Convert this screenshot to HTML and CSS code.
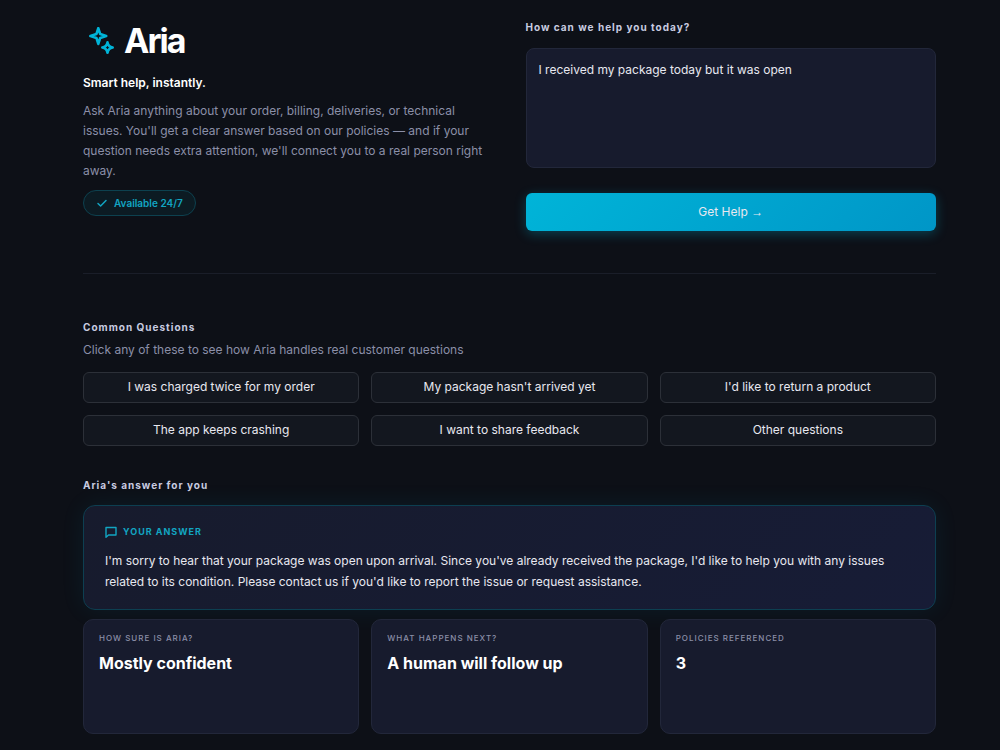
FILE: index.html
```
<!DOCTYPE html>
<html lang="en">
<head>
	<meta charset="utf-8">
	<title>Aria</title>
	<meta name="viewport" content="width=device-width, initial-scale=1">
	<link rel="stylesheet" href="styles.css">
</head>

<body>

	<main class="page">

		<section class="hero">
			<div class="intro">
				<h1 class="brand">
					<svg class="brand-icon" viewBox="0 0 28 28" fill="none" stroke="currentColor" stroke-width="2.6" stroke-linejoin="round" aria-hidden="true">
						<path d="M10.3 1.2 L12.2 7.1 L18.2 9 L12.2 10.9 L10.3 16.9 L8.4 10.9 L2.4 9 L8.4 7.1 Z"/>
						<path d="M19.5 15.4 Q20.3 19.7 24.7 20.5 Q20.3 21.3 19.5 25.7 Q18.7 21.3 14.3 20.5 Q18.7 19.7 19.5 15.4 Z"/>
					</svg>
					Aria
				</h1>
				<p class="tagline">Smart help, instantly.</p>
				<p class="about">Ask Aria anything about your order, billing, deliveries, or technical issues. You'll get a clear answer based on our policies — and if your question needs extra attention, we'll connect you to a real person right away.</p>
				<span class="badge">
					<svg class="badge-icon" viewBox="0 0 12 12" fill="none" stroke="currentColor" stroke-width="1.5" stroke-linecap="round" stroke-linejoin="round" aria-hidden="true">
						<path d="M2 6.5 L4.6 9 L10 3.5"/>
					</svg>
					Available 24/7
				</span>
			</div>

			<form class="ask">
				<label class="label" for="question">How can we help you today?</label>
				<textarea class="question" id="question" spellcheck="false">I received my package today but it was open</textarea>
				<button class="submit" type="button">Get Help <span class="arrow">→</span></button>
			</form>
		</section>

		<hr class="divider">

		<section class="common">
			<h2 class="label">Common Questions</h2>
			<p class="hint">Click any of these to see how Aria handles real customer questions</p>
			<div class="grid">
				<button class="option" type="button">I was charged twice for my order</button>
				<button class="option" type="button">My package hasn't arrived yet</button>
				<button class="option" type="button">I'd like to return a product</button>
				<button class="option" type="button">The app keeps crashing</button>
				<button class="option" type="button">I want to share feedback</button>
				<button class="option" type="button">Other questions</button>
			</div>
		</section>

		<section class="result">
			<h2 class="label">Aria's answer for you</h2>
			<article class="answer">
				<h3 class="answer-title">
					<svg class="answer-icon" viewBox="0 0 12 12" fill="none" stroke="currentColor" stroke-width="1.4" stroke-linejoin="round" aria-hidden="true">
						<path d="M1 1.5 H11 V9 H3.5 L1 11.2 Z"/>
					</svg>
					Your answer
				</h3>
				<p class="answer-text">I'm sorry to hear that your package was open upon arrival. Since you've already received the package, I'd like to help you with any issues related to its condition. Please contact us if you'd like to report the issue or request assistance.</p>
			</article>
			<div class="grid">
				<div class="card">
					<h3 class="card-title">How sure is Aria?</h3>
					<p class="card-value">Mostly confident</p>
				</div>
				<div class="card">
					<h3 class="card-title">What happens next?</h3>
					<p class="card-value">A human will follow up</p>
				</div>
				<div class="card">
					<h3 class="card-title">Policies referenced</h3>
					<p class="card-value">3</p>
				</div>
			</div>
		</section>

	</main>

</body>
</html>
```
FILE: styles.css
```
* {
	box-sizing: border-box;
	padding: 0;
	margin: 0;
}
body {
	background-color: #0d1017;
	color: #e8e8f0;
	font-family: Inter, "Liberation Sans", sans-serif;
	font-size: 12px;
	line-height: 20px;
}
button,
textarea {
	font: inherit;
	color: inherit;
}
button {
	cursor: pointer;
}
.page {
	padding: 17px 64px 16px 83px;
}

/* hero */
.hero {
	display: grid;
	grid-template-columns: 1fr 1fr;
	gap: 32px;
}
.brand {
	display: flex;
	align-items: center;
	gap: 8px;
	padding-left: 5px;
	color: #fff;
	font-size: 34px;
	font-weight: 700;
	line-height: 48px;
	letter-spacing: -2px;
}
.brand-icon {
	width: 28px;
	height: 28px;
	color: #00b4d8;
}
.tagline {
	margin-top: 8px;
	color: #fff;
	font-weight: 600;
}
.about {
	margin-top: 8px;
	color: #8b8fa8;
}
.badge {
	display: inline-flex;
	align-items: center;
	gap: 6px;
	margin-top: 9px;
	padding: 2px 12px;
	border: 1px solid #0d414f;
	border-radius: 16px;
	background-color: #0c1b23;
	color: #12a5c2;
	font-size: 10px;
	font-weight: 600;
}
.badge-icon {
	width: 12px;
	height: 12px;
}
.label {
	display: block;
	color: #c8cce0;
	font-size: 10px;
	font-weight: 700;
	letter-spacing: 1px;
}
.ask {
	display: flex;
	flex-direction: column;
}
.question {
	width: 100%;
	height: 120px;
	margin-top: 11px;
	padding: 11px 12px;
	border: 1px solid #22273a;
	border-radius: 8px;
	background-color: #171b2d;
	outline: none;
	resize: none;
}
.submit {
	margin-top: 25px;
	padding: 9px;
	border: none;
	border-radius: 6px;
	background: linear-gradient(135deg, #00b4d8, #0096c7);
	box-shadow: 0 3px 12px rgba(0, 180, 216, 0.3);
}
.arrow {
	font-family: "Liberation Sans", sans-serif;
	line-height: 1;
}
.divider {
	margin: 42px 0 43px;
	border: none;
	border-top: 1px solid #1a1e29;
}

/* common questions */
.hint {
	margin-top: 3px;
	color: #8b8fa8;
}
.grid {
	display: grid;
	grid-template-columns: repeat(3, 1fr);
	gap: 12px;
}
.common .grid {
	margin-top: 12px;
}
.option {
	padding: 4px 12px 5px;
	border: 1px solid #2c3038;
	border-radius: 6px;
	background-color: #13171f;
}

/* answer */
.result {
	margin-top: 29px;
}
.answer {
	margin: 10px 0 9px;
	padding: 16px 21px 17px;
	border: 1px solid #0d3f51;
	border-radius: 12px;
	background: linear-gradient(135deg, #171b2d, #171c36);
	box-shadow: 0 0 24px rgba(0, 180, 216, 0.08);
}
.answer-title {
	display: flex;
	align-items: center;
	gap: 6px;
	color: #12a5c2;
	font-size: 9px;
	font-weight: 700;
	letter-spacing: 1px;
	text-transform: uppercase;
}
.answer-icon {
	width: 12px;
	height: 12px;
}
.answer-text {
	margin-top: 8px;
	line-height: 21px;
}
.card {
	min-height: 115px;
	padding: 8px 15px;
	border: 1px solid #22273a;
	border-radius: 10px;
	background-color: #171b2d;
}
.card-title {
	color: #8b8fa8;
	font-size: 8px;
	font-weight: 500;
	letter-spacing: 1px;
	text-transform: uppercase;
}
.card-value {
	margin-top: 3px;
	color: #fff;
	font-size: 16px;
	font-weight: 700;
	line-height: 24px;
}
```
